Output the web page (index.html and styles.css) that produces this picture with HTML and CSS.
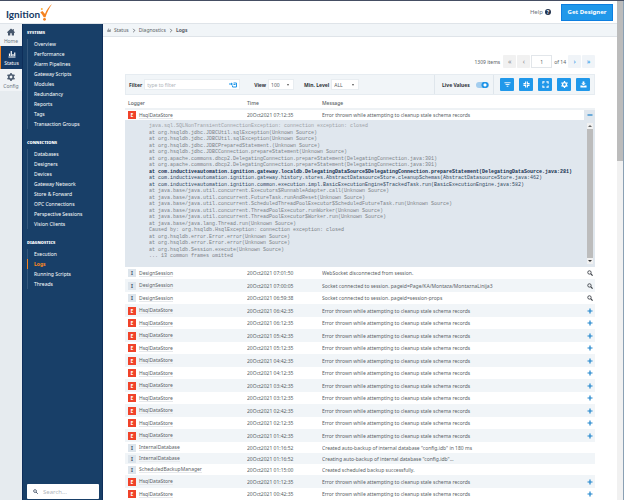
FILE: index.html
```html
<!doctype html>
<html lang="en">
<head>
  <meta charset="utf-8">
  <title>Ignition - Logs</title>
  <link rel="stylesheet" href="styles.css">
</head>

<body>

  <!-- shared icons -->
  <svg class="sprite" aria-hidden="true">
    <symbol id="search" viewBox="0 0 16 16"><circle cx="6.5" cy="6.5" r="4.5" fill="none" stroke="currentColor" stroke-width="2.4"/><path d="M10 10l5 5" stroke="currentColor" stroke-width="3"/></symbol>
    <symbol id="plus" viewBox="0 0 12 12"><path d="M6 1v10M1 6h10" stroke="currentColor" stroke-width="2.4"/></symbol>
    <symbol id="bars" viewBox="0 0 16 16"><path d="M1 14h14M3 12V7M6.500 12V2M10 12V8M13.500 12V5" fill="none" stroke="currentColor" stroke-width="2.4"/></symbol>
    <symbol id="gear" viewBox="0 0 16 16"><circle cx="8" cy="8" r="4.400" fill="none" stroke="currentColor" stroke-width="3"/><path d="M8 0v3M8 13v3M1 4l2.600 1.500M12.400 10.500L15 12M1 12l2.600-1.500M12.400 5.500L15 4" stroke="currentColor" stroke-width="3"/></symbol>
  </svg>

  <div class="page">
    <div class="app">
      <header class="header">
        <a href="#" class="logo" aria-label="Ignition">
          <span>Ignition</span>
          <svg class="logo-check" viewBox="0 0 12 17"><path d="M12 0C9 2.500 6.500 6 5 10L2.500 7 .3 8.200c1.500 1.800 2.600 3.300 3.400 5h1.800C7 8.500 9 4.500 12 0z" fill="#f58220"/><circle cx="4.500" cy="15.300" r="1.400" fill="#f58220"/><circle cx="1.800" cy="5" r="1" fill="#fbb040"/></svg>
        </a>
        <a href="#" class="help">Help <span class="help-mark">?</span></a>
        <button class="designer">Get Designer</button>
      </header>

      <div class="columns">
        <nav class="rail">
          <a href="#" class="rail-item">
            <svg viewBox="0 0 16 16"><path d="M8 1L0 8.500 1 10l1-.8V15h4.500v-4.500h3V15H14V9.200l1 .8 1-1.500-2.500-2.400V2h-2v2.200z" fill="currentColor"/></svg>
            Home
          </a>
          <a href="#" class="rail-item current">
            <svg><use href="#bars"/></svg>
            Status
          </a>
          <a href="#" class="rail-item">
            <svg><use href="#gear"/></svg>
            Config
          </a>
        </nav>

        <nav class="sidebar">
          <h2>SYSTEMS</h2>
          <ul>
            <li><a href="#">Overview</a></li>
            <li><a href="#">Performance</a></li>
            <li><a href="#">Alarm Pipelines</a></li>
            <li><a href="#">Gateway Scripts</a></li>
            <li><a href="#">Modules</a></li>
            <li><a href="#">Redundancy</a></li>
            <li><a href="#">Reports</a></li>
            <li><a href="#">Tags</a></li>
            <li><a href="#">Transaction Groups</a></li>
          </ul>
          <h2>CONNECTIONS</h2>
          <ul>
            <li><a href="#">Databases</a></li>
            <li><a href="#">Designers</a></li>
            <li><a href="#">Devices</a></li>
            <li><a href="#">Gateway Network</a></li>
            <li><a href="#">Store &amp; Forward</a></li>
            <li><a href="#">OPC Connections</a></li>
            <li><a href="#">Perspective Sessions</a></li>
            <li><a href="#">Vision Clients</a></li>
          </ul>
          <h2>DIAGNOSTICS</h2>
          <ul>
            <li><a href="#">Execution</a></li>
            <li class="current"><a href="#">Logs</a></li>
            <li><a href="#">Running Scripts</a></li>
            <li><a href="#">Threads</a></li>
          </ul>
          <label class="search">
            <svg><use href="#search"/></svg>
            <input type="search" placeholder="Search..." aria-label="Search">
          </label>
        </nav>

        <main>
          <div class="breadcrumb">
            <svg><use href="#bars"/></svg>
            <a href="#">Status</a>
            <svg class="chevron" viewBox="0 0 4 6"><path d="M1 1l2 2-2 2" fill="none" stroke="currentColor"/></svg>
            <a href="#">Diagnostics</a>
            <svg class="chevron" viewBox="0 0 4 6"><path d="M1 1l2 2-2 2" fill="none" stroke="currentColor"/></svg>
            <strong>Logs</strong>
          </div>

          <div class="content">
            <div class="pager">
              <span class="count">1309 items</span>
              <button disabled aria-label="First page">«</button>
              <button disabled aria-label="Previous page">‹</button>
              <input type="text" value="1" aria-label="Page">
              <span class="of">of 14</span>
              <button aria-label="Next page">›</button>
              <button aria-label="Last page">»</button>
            </div>

            <div class="toolbar">
              <div class="filters">
                <label for="filter">Filter</label>
                <span class="filter-box">
                  <input id="filter" type="text" placeholder="type to filter">
                  <svg viewBox="0 0 16 12"><path d="M0 4h6M9 2h6v8H7V7M9 5h4" fill="none" stroke="#2196e8" stroke-width="2"/><path d="M4 1l4 3-4 3z" fill="#2196e8"/></svg>
                </span>
                <label for="view">View</label>
                <span class="pick view"><select id="view"><option>100</option></select></span>
                <label for="level">Min. Level</label>
                <span class="pick level"><select id="level"><option>ALL</option></select></span>
              </div>
              <label class="live">Live Values <input type="checkbox" checked></label>
              <div class="actions">
                <button aria-label="Filter"><svg viewBox="0 0 16 16"><path d="M1 4h14M3.500 8h9M6 12h4" stroke="currentColor" stroke-width="2"/></svg></button>
                <button aria-label="Collapse all"><svg viewBox="0 0 16 16"><path d="M6 1v5H1M10 1v5h5M6 15v-5H1M10 15v-5h5" fill="none" stroke="currentColor" stroke-width="2.400"/></svg></button>
                <button aria-label="Expand all"><svg viewBox="0 0 16 16"><path d="M2 6V2h4M10 2h4v4M2 10v4h4M10 14h4v-4" fill="none" stroke="currentColor" stroke-width="2.400"/></svg></button>
                <button aria-label="Settings"><svg><use href="#gear"/></svg></button>
                <button aria-label="Download"><svg viewBox="0 0 16 16"><path d="M1 10h4l3 2 3-2h4v5H1z" fill="currentColor"/><path d="M8 1v4" stroke="currentColor" stroke-width="4"/><path d="M3 5h10l-5 5z" fill="currentColor"/></svg></button>
              </div>
            </div>

            <table class="logs">
              <thead>
                <tr><th class="logger">Logger</th><th class="time">Time</th><th>Message</th><th class="action"></th></tr>
              </thead>
              <tbody>
                <tr class="open"><td><b class="badge error">E</b><a href="#">HsqlDataStore</a></td><td>20Oct2021 07:12:35</td><td>Error thrown while attempting to cleanup stale schema records</td><td><button aria-label="Hide details"><svg viewBox="0 0 12 12"><path d="M1 6h10" stroke="currentColor" stroke-width="2.4"/></svg></button></td></tr>
                <tr class="details">
                  <td colspan="4">
                    <div class="trace">
<pre><span class="title">java.sql.SQLNonTransientConnectionException: connection exception: closed</span>
at org.hsqldb.jdbc.JDBCUtil.sqlException(Unknown Source)
at org.hsqldb.jdbc.JDBCUtil.sqlException(Unknown Source)
at org.hsqldb.jdbc.JDBCPreparedStatement.(Unknown Source)
at org.hsqldb.jdbc.JDBCConnection.prepareStatement(Unknown Source)
at org.apache.commons.dbcp2.DelegatingConnection.prepareStatement(DelegatingConnection.java:301)
at org.apache.commons.dbcp2.DelegatingConnection.prepareStatement(DelegatingConnection.java:301)
<b>at com.inductiveautomation.ignition.gateway.localdb.DelegatingDataSource$DelegatingConnection.prepareStatement(DelegatingDataSource.java:281)</b>
<span class="own">at com.inductiveautomation.ignition.gateway.history.stores.AbstractDatasourceStore.cleanupSchemas(AbstractDatasourceStore.java:462)
at com.inductiveautomation.ignition.common.execution.impl.BasicExecutionEngine$TrackedTask.run(BasicExecutionEngine.java:582)</span>
at java.base/java.util.concurrent.Executors$RunnableAdapter.call(Unknown Source)
at java.base/java.util.concurrent.FutureTask.runAndReset(Unknown Source)
at java.base/java.util.concurrent.ScheduledThreadPoolExecutor$ScheduledFutureTask.run(Unknown Source)
at java.base/java.util.concurrent.ThreadPoolExecutor.runWorker(Unknown Source)
at java.base/java.util.concurrent.ThreadPoolExecutor$Worker.run(Unknown Source)
at java.base/java.lang.Thread.run(Unknown Source)
Caused by: org.hsqldb.HsqlException: connection exception: closed
at org.hsqldb.error.Error.error(Unknown Source)
at org.hsqldb.error.Error.error(Unknown Source)
at org.hsqldb.Session.execute(Unknown Source)
... 13 common frames omitted</pre>
                      <div class="scroll">
                        <svg viewBox="0 0 6 6"><path d="M1 4h4L3 2z" fill="#666"/></svg>
                        <div class="thumb"></div>
                        <svg viewBox="0 0 6 6"><path d="M1 2h4L3 4z" fill="#333"/></svg>
                      </div>
                    </div>
                  </td>
                </tr>
                <tr><td><b class="badge">I</b><a href="#">DesignSession</a></td><td>20Oct2021 07:01:50</td><td>WebSocket disconnected from session.</td><td><button class="find" aria-label="Inspect"><svg><use href="#search"/></svg></button></td></tr>
                <tr><td><b class="badge">I</b><a href="#">DesignSession</a></td><td>20Oct2021 07:00:05</td><td>Socket connected to session. pageid=Page/KA/Montaza/MontaznaLinija3</td><td><button class="find" aria-label="Inspect"><svg><use href="#search"/></svg></button></td></tr>
                <tr><td><b class="badge">I</b><a href="#">DesignSession</a></td><td>20Oct2021 06:59:38</td><td>Socket connected to session. pageid=session-props</td><td><button class="find" aria-label="Inspect"><svg><use href="#search"/></svg></button></td></tr>
                <tr><td><b class="badge error">E</b><a href="#">HsqlDataStore</a></td><td>20Oct2021 06:42:35</td><td>Error thrown while attempting to cleanup stale schema records</td><td><button aria-label="Show details"><svg><use href="#plus"/></svg></button></td></tr>
                <tr><td><b class="badge error">E</b><a href="#">HsqlDataStore</a></td><td>20Oct2021 06:12:35</td><td>Error thrown while attempting to cleanup stale schema records</td><td><button aria-label="Show details"><svg><use href="#plus"/></svg></button></td></tr>
                <tr><td><b class="badge error">E</b><a href="#">HsqlDataStore</a></td><td>20Oct2021 05:42:35</td><td>Error thrown while attempting to cleanup stale schema records</td><td><button aria-label="Show details"><svg><use href="#plus"/></svg></button></td></tr>
                <tr><td><b class="badge error">E</b><a href="#">HsqlDataStore</a></td><td>20Oct2021 05:12:35</td><td>Error thrown while attempting to cleanup stale schema records</td><td><button aria-label="Show details"><svg><use href="#plus"/></svg></button></td></tr>
                <tr><td><b class="badge error">E</b><a href="#">HsqlDataStore</a></td><td>20Oct2021 04:42:35</td><td>Error thrown while attempting to cleanup stale schema records</td><td><button aria-label="Show details"><svg><use href="#plus"/></svg></button></td></tr>
                <tr><td><b class="badge error">E</b><a href="#">HsqlDataStore</a></td><td>20Oct2021 04:12:35</td><td>Error thrown while attempting to cleanup stale schema records</td><td><button aria-label="Show details"><svg><use href="#plus"/></svg></button></td></tr>
                <tr><td><b class="badge error">E</b><a href="#">HsqlDataStore</a></td><td>20Oct2021 03:42:35</td><td>Error thrown while attempting to cleanup stale schema records</td><td><button aria-label="Show details"><svg><use href="#plus"/></svg></button></td></tr>
                <tr><td><b class="badge error">E</b><a href="#">HsqlDataStore</a></td><td>20Oct2021 03:12:35</td><td>Error thrown while attempting to cleanup stale schema records</td><td><button aria-label="Show details"><svg><use href="#plus"/></svg></button></td></tr>
                <tr><td><b class="badge error">E</b><a href="#">HsqlDataStore</a></td><td>20Oct2021 02:42:35</td><td>Error thrown while attempting to cleanup stale schema records</td><td><button aria-label="Show details"><svg><use href="#plus"/></svg></button></td></tr>
                <tr><td><b class="badge error">E</b><a href="#">HsqlDataStore</a></td><td>20Oct2021 02:12:35</td><td>Error thrown while attempting to cleanup stale schema records</td><td><button aria-label="Show details"><svg><use href="#plus"/></svg></button></td></tr>
                <tr><td><b class="badge error">E</b><a href="#">HsqlDataStore</a></td><td>20Oct2021 01:42:35</td><td>Error thrown while attempting to cleanup stale schema records</td><td><button aria-label="Show details"><svg><use href="#plus"/></svg></button></td></tr>
                <tr class="short"><td><b class="badge">I</b><a href="#">InternalDatabase</a></td><td>20Oct2021 01:16:52</td><td>Created auto-backup of internal database "config.idb" in 180 ms</td><td></td></tr>
                <tr class="short"><td><b class="badge">I</b><a href="#">InternalDatabase</a></td><td>20Oct2021 01:16:52</td><td>Creating auto-backup of internal database "config.idb"...</td><td></td></tr>
                <tr class="short"><td><b class="badge">I</b><a href="#">ScheduledBackupManager</a></td><td>20Oct2021 01:15:00</td><td>Created scheduled backup successfully.</td><td></td></tr>
                <tr><td><b class="badge error">E</b><a href="#">HsqlDataStore</a></td><td>20Oct2021 01:12:35</td><td>Error thrown while attempting to cleanup stale schema records</td><td><button aria-label="Show details"><svg><use href="#plus"/></svg></button></td></tr>
                <tr><td><b class="badge error">E</b><a href="#">HsqlDataStore</a></td><td>20Oct2021 00:42:35</td><td>Error thrown while attempting to cleanup stale schema records</td><td><button aria-label="Show details"><svg><use href="#plus"/></svg></button></td></tr>
              </tbody>
            </table>
          </div>
        </main>
      </div>
    </div>
    <div class="page-scroll"><div class="thumb"></div></div>
  </div>

</body>

</html>
```

FILE: styles.css
```css
* {
  box-sizing: border-box;
}
body {
  margin: 0;
  background: #fff;
  color: #5a5f66;
  font-family: "Noto Sans", "Open Sans", sans-serif;
  font-size: 5px;
  line-height: 8px;
}
a {
  color: inherit;
  text-decoration: none;
}
button, input, select {
  font: inherit;
  color: inherit;
  margin: 0;
  padding: 0;
  border: none;
  outline: none;
}
button {
  display: flex;
  align-items: center;
  justify-content: center;
  cursor: pointer;
}
::placeholder {
  color: #b0b5bb;
}
.sprite {
  display: none;
}

.page {
  display: flex;
  height: 100vh;
  overflow: hidden;
  border-top: 1px solid #454e63;
}
.app {
  flex: 1;
  display: flex;
  flex-direction: column;
  min-width: 0;
}
.page-scroll {
  width: 7px;
  background: #f1f1f1;
  border-right: 1px solid #8aa0b4;
}
.page-scroll .thumb {
  height: 32%;
  background: #bcbcbc;
}

/* header */
.header {
  display: flex;
  align-items: center;
  flex: none;
  height: 23px;
  padding: 0 4px 0 6px;
  border-bottom: 1px solid #dfe4e9;
}
.logo {
  display: flex;
  align-items: center;
  margin-right: auto;
  color: #173a66;
  font-family: Lato, sans-serif;
  font-size: 10px;
  font-weight: bold;
}
.logo span {
  padding-top: 4px;
}
.logo-check {
  width: 12px;
  height: 17px;
}
.help {
  display: flex;
  align-items: center;
  gap: 2px;
  margin-right: 10px;
  color: #6c7580;
  font-size: 6px;
}
.help-mark {
  width: 6px;
  border-radius: 50%;
  background: #24344f;
  color: #fff;
  font-size: 5px;
  font-weight: bold;
  line-height: 6px;
  text-align: center;
}
.designer {
  width: 52px;
  height: 17px;
  border: 1px solid #0d7fe0;
  background: #2098ea;
  color: #fff;
  font-size: 6px;
  font-weight: bold;
}

.columns {
  flex: 1;
  display: flex;
  min-height: 0;
}

/* icon rail */
.rail {
  width: 22px;
  background: #e6ebef;
}
.rail-item {
  display: flex;
  flex-direction: column;
  align-items: center;
  height: 22px;
  padding-top: 4px;
  background: #f0f3f6;
  color: #6c7784;
}
.rail-item svg {
  width: 8px;
  height: 8px;
  margin-bottom: 1px;
  color: #46566b;
}
.rail-item.current {
  height: 23px;
  border-left: 1px solid #f58220;
  background: #153a66;
  color: #fff;
}
.rail-item.current svg {
  color: #fff;
}

/* sidebar */
.sidebar {
  display: flex;
  flex-direction: column;
  width: 81px;
  padding: 5px 3px 1px 4px;
  border: solid #0e2e5a;
  border-width: 0 1px;
  background: #183f68;
  color: #fff;
}
.sidebar h2 {
  margin: 0 0 3px;
  font-size: 4px;
  font-weight: 900;
  line-height: 7px;
}
.sidebar ul {
  margin: 0 0 10px;
  padding: 0;
  list-style: none;
}
.sidebar li {
  height: 10px;
  padding-left: 6px;
  border-left: 1px solid #34577c;
  line-height: 10px;
}
.sidebar li.current {
  border-color: #f58220;
  color: #ff8a1f;
  font-weight: bold;
}
.search {
  display: flex;
  align-items: center;
  gap: 5px;
  height: 15px;
  margin-top: auto;
  padding: 0 6px;
  border-radius: 1px;
  background: #fff;
  color: #33435a;
}
.search svg {
  flex: none;
  width: 5px;
  height: 5px;
}
.search input {
  width: 100%;
  font-size: 6px;
}

/* main area */
main {
  flex: 1;
  min-width: 0;
}
.breadcrumb {
  display: flex;
  align-items: center;
  gap: 3px;
  height: 13px;
  padding-left: 4px;
  border-bottom: 1px solid #dfe4e9;
  background: #f1f5f8;
}
.breadcrumb svg {
  width: 4px;
  height: 4px;
}
.breadcrumb .chevron {
  height: 5px;
}
.content {
  padding: 18px 22px 0;
}

/* pager */
.pager {
  display: flex;
  align-items: center;
  justify-content: flex-end;
  gap: 1px;
  height: 13px;
  margin-bottom: 6px;
}
.pager button {
  width: 13px;
  height: 13px;
  border-radius: 1px;
  background: #f0f4f8;
  color: #2095e8;
  font-size: 7px;
}
.pager button:disabled {
  background: #f1f1f1;
  color: #8c9096;
}
.pager input {
  width: 21px;
  height: 13px;
  border: 1px solid #e2e6ea;
  text-align: center;
}
.pager .count {
  margin-right: 2px;
}
.pager .of {
  padding: 0 1px;
}

/* toolbar */
.toolbar {
  display: flex;
  height: 21px;
  border: 1px solid #e6ecf1;
  background: #f1f5f8;
}
.filters, .live, .actions {
  display: flex;
  align-items: center;
}
.filters {
  flex: 1;
  padding-left: 3px;
}
.toolbar label {
  color: #30343a;
  font-weight: bold;
}
.filter-box, .pick {
  display: flex;
  align-items: center;
  height: 11px;
  border: 1px solid #e8edf1;
  background: #fff;
}
.filter-box {
  flex: 0 1 96px;
  margin: 0 14px 0 2px;
  padding: 0 2px;
}
.filter-box input {
  flex: 1;
  min-width: 0;
}
.filter-box svg {
  width: 8px;
  height: 6px;
}
.pick {
  position: relative;
  margin-left: 2px;
}
.pick::after {
  content: "";
  position: absolute;
  right: 4px;
  border: 1px solid transparent;
  border-top: 2px solid #555;
  border-bottom: none;
}
.pick select {
  width: 100%;
  padding-left: 2px;
  appearance: none;
  background: none;
}
.view {
  width: 26px;
  margin-right: 10px;
}
.level {
  width: 28px;
}
.live {
  gap: 6px;
  width: 60px;
  padding-left: 7px;
  border: solid #dfe6ec;
  border-width: 0 1px;
  white-space: nowrap;
}
.live input {
  flex: none;
  width: 13px;
  height: 6px;
  border-radius: 3px;
  appearance: none;
  background: radial-gradient(circle at 9px 3px, #fff 1px, #2095e8 2px, #2095e8 3px, #a3cdee 4px);
}
.actions {
  gap: 5px;
  padding: 0 4px 0 6px;
}
.actions button {
  width: 14px;
  height: 13px;
  border-radius: 1px;
  background: #2098ea;
  color: #fff;
}
.actions svg {
  width: 7px;
  height: 7px;
}

/* log table */
.logs {
  width: 100%;
  margin-top: 2px;
  border-collapse: collapse;
  table-layout: fixed;
}
.logs th {
  height: 12px;
  padding: 0;
  border-bottom: 2px solid #eef2f5;
  font-weight: 500;
  text-align: left;
}
.logs th.logger {
  width: 122px;
  padding-left: 3px;
}
.logs th.time {
  width: 75px;
}
.logs th.action {
  width: 11px;
}
.logs td {
  height: 12px;
  padding: 0;
  overflow: hidden;
  white-space: nowrap;
}
.logs td:first-child {
  padding-left: 3px;
}
.logs tr:nth-child(even) td {
  height: 13px;
  background: #f1f5f8;
}
.logs tr.short td {
  height: 11px;
}
.logs tr.open td {
  height: 11px;
}
.logs tr.open td:last-child {
  background: #e0e7ee;
}
.logs td a {
  border-bottom: 1px solid #e6e9ec;
}
.logs button {
  width: 100%;
  background: none;
  color: #1d84cc;
}
.logs button.find {
  color: #3d4248;
}
.logs button svg {
  width: 6px;
  height: 6px;
}
.badge {
  display: inline-block;
  width: 8px;
  height: 8px;
  margin-right: 3px;
  background: #dde5ec;
  color: #45586e;
  font-size: 5px;
  text-align: center;
  vertical-align: middle;
}
.badge.error {
  background: #f0432a;
  color: #fff;
}

/* stack trace */
.logs tr.details td {
  padding: 3px 2px 3px 24px;
  background: #e0e7ee;
}
.trace {
  display: flex;
  height: 141px;
}
.trace pre {
  flex: 1;
  min-width: 0;
  margin: 0;
  overflow: hidden;
  color: #7c8288;
  font-family: "Liberation Mono", monospace;
  font-size: 5px;
  line-height: 1.3;
}
.trace .title {
  color: #9da2a7;
}
.trace b {
  color: #14304f;
}
.trace .own {
  color: #304861;
}
.scroll {
  display: flex;
  flex-direction: column;
  width: 6px;
  background: #f1f1f1;
}
.scroll svg {
  flex: none;
  height: 6px;
}
.scroll .thumb {
  flex: 1;
  background: #bcbcbc;
}
```
